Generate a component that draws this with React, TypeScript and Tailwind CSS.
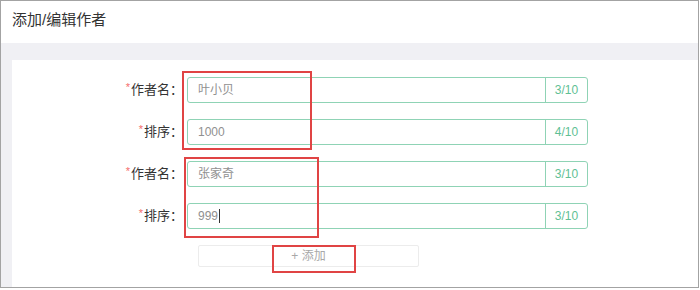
import React from "react";

const rows = [
  { label: "作者名", value: "叶小贝", count: "3/10" },
  { label: "排序", value: "1000", count: "4/10" },
  { label: "作者名", value: "张家奇", count: "3/10" },
  { label: "排序", value: "999", count: "3/10", cursor: true },
];

export default function App() {
  return (
    <div
      className="relative w-[699px] h-[288px] border border-[#a3a3a3] bg-[#f0f0f4] overflow-hidden"
      style={{ fontFamily: '"Liberation Sans", "Noto Sans CJK SC", sans-serif' }}
    >
      {/* Header */}
      <div className="h-[42px] bg-white pl-[11px] pt-[8px] text-[15px] text-[#333]">
        添加/编辑作者
      </div>

      {/* Card */}
      <div className="ml-[11px] mt-[17px] h-[228px] bg-white pt-[17px]">
        <div className="flex flex-col gap-[16px]">
          {rows.map((r, i) => (
            <div key={i} className="flex items-center h-[26px]">
              <div className="w-[175px] pr-[4px] text-right text-[13px] text-[#333]">
                <span className="text-[#f56c6c] text-[11px] relative -top-[3px] mr-[1px]">*</span>
                {r.label}：
              </div>
              <div className="flex w-[401px] h-[26px] border border-[#8fd3b5] rounded-[3px]">
                <div className="flex-1 flex items-center pl-[10px] text-[12px] text-[#909090]">
                  {r.value}
                  {r.cursor && <span className="ml-[1px] w-px h-[14px] bg-[#333]" />}
                </div>
                <div className="w-[42px] border-l border-[#8fd3b5] flex items-center justify-center text-[12px] text-[#5fbf95]">
                  {r.count}
                </div>
              </div>
            </div>
          ))}
        </div>

        <div className="ml-[186px] mt-[16px] w-[221px] h-[22px] border border-[#ececec] rounded-[2px] flex items-center justify-center text-[12px] text-[#a8a8a8]">
          + 添加
        </div>
      </div>

      {/* Annotation boxes */}
      <div className="absolute left-[181px] top-[70px] w-[130px] h-[79px] border-2 border-[#e04444]" />
      <div className="absolute left-[183px] top-[156px] w-[135px] h-[81px] border-2 border-[#e04444]" />
      <div className="absolute left-[271px] top-[244px] w-[84px] h-[28px] border-2 border-[#e04444]" />
    </div>
  );
}
